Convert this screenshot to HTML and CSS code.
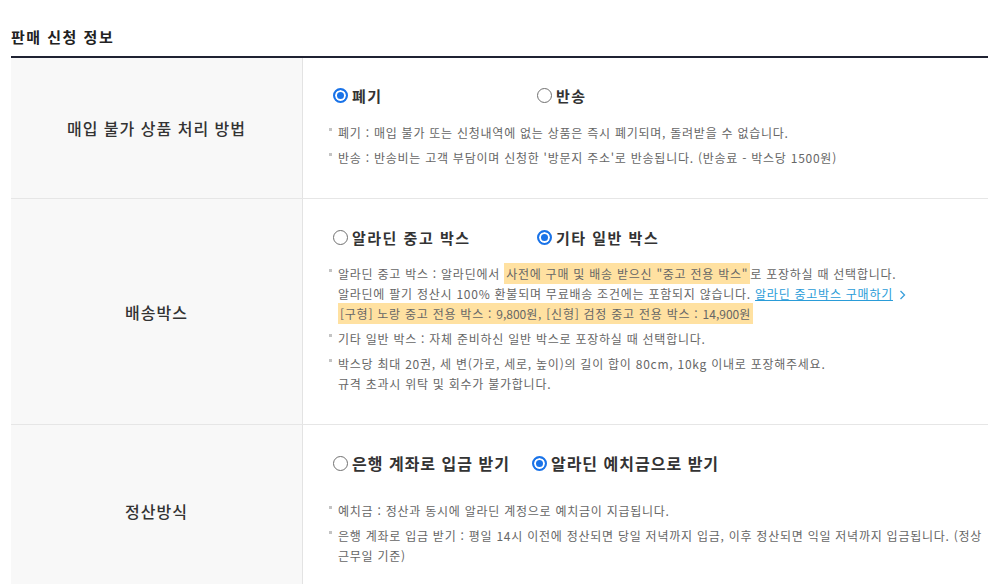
FILE: index.html
```html
<!DOCTYPE html>
<html lang="ko">
<head>
    <meta charset="UTF-8">
    <meta name="viewport" content="width=device-width, initial-scale=1.0">
    <title>판매 신청 정보</title>
    <link rel="stylesheet" href="styles.css">
</head>
<body>
    <div class="section">
        <h2 class="section-title">판매 신청 정보</h2>

        <div class="form-table">
            <!-- 매입 불가 상품 -->
            <div class="form-row">
                <div class="form-label">매입 불가 상품 처리 방법</div>
                <div class="form-field">
                    <div class="options">
                        <label class="option"><span class="radio checked"></span>폐기</label>
                        <label class="option"><span class="radio"></span>반송</label>
                    </div>
                    <ul class="notes">
                        <li>폐기 : 매입 불가 또는 신청내역에 없는 상품은 즉시 폐기되며, 돌려받을 수 없습니다.</li>
                        <li>반송 : 반송비는 고객 부담이며 신청한 '방문지 주소'로 반송됩니다. (반송료 - 박스당 1500원)</li>
                    </ul>
                </div>
            </div>

            <!-- 배송박스 -->
            <div class="form-row">
                <div class="form-label">배송박스</div>
                <div class="form-field">
                    <div class="options">
                        <label class="option"><span class="radio"></span>알라딘 중고 박스</label>
                        <label class="option"><span class="radio checked"></span>기타 일반 박스</label>
                    </div>
                    <ul class="notes notes-tight">
                        <li>알라딘 중고 박스 : 알라딘에서 <span class="mark">사전에 구매 및 배송 받으신 "중고 전용 박스"</span>로 포장하실 때 선택합니다.<br>
                            알라딘에 팔기 정산시 100% 환불되며 무료배송 조건에는 포함되지 않습니다. <a href="#" class="link">알라딘 중고박스 구매하기</a>
                            <svg class="chevron" width="7" height="10" viewBox="0 0 7 10"><polyline points="1.5,1 5.5,5 1.5,9" fill="none" stroke="#3a9fdb" stroke-width="1.3"/></svg><br>
                            <span class="mark">[구형] 노랑 중고 전용 박스 : <span class="num">9,800</span>원, [신형] 검정 중고 전용 박스 : <span class="num">14,900</span>원</span></li>
                        <li>기타 일반 박스 : 자체 준비하신 일반 박스로 포장하실 때 선택합니다.</li>
                        <li>박스당 최대 20권, 세 변(가로, 세로, 높이)의 길이 합이 80cm, 10kg 이내로 포장해주세요.<br>
                            규격 초과시 위탁 및 회수가 불가합니다.</li>
                    </ul>
                </div>
            </div>

            <!-- 정산방식 -->
            <div class="form-row">
                <div class="form-label">정산방식</div>
                <div class="form-field">
                    <div class="options options-wide">
                        <label class="option"><span class="radio"></span>은행 계좌로 입금 받기</label>
                        <label class="option"><span class="radio checked"></span>알라딘 예치금으로 받기</label>
                    </div>
                    <ul class="notes notes-far">
                        <li>예치금 : 정산과 동시에 알라딘 계정으로 예치금이 지급됩니다.</li>
                        <li>은행 계좌로 입금 받기 : 평일 14시 이전에 정산되면 당일 저녁까지 입금, 이후 정산되면 익일 저녁까지 입금됩니다. (정상 근무일 기준)</li>
                    </ul>
                </div>
            </div>
        </div>
    </div>
</body>
</html>
```

FILE: styles.css
```css
body {
    margin: 0;
    font-family: "Noto Sans CJK KR", "Noto Sans", sans-serif;
    color: #333;
    background-color: #fff;
}

.section {
    width: 977px;
    margin-left: 11px;
}

.section-title {
    margin: 26px 0 0;
    padding-bottom: 8px;
    font-size: 15px;
    line-height: 22px;
    font-weight: 700;
    letter-spacing: 1.5px;
    color: #222;
    border-bottom: 2px solid #1f2232;
}

.form-row {
    display: grid;
    grid-template-columns: 292px 1fr;
    border-top: 1px solid #e6e6e6;
}

.form-row:first-child {
    border-top: none;
}

.form-label {
    display: flex;
    align-items: center;
    justify-content: center;
    background-color: #f8f8f8;
    border-right: 1px solid #e3e3e3;
    font-size: 16px;
    font-weight: 500;
    letter-spacing: 1px;
    color: #333;
}

.form-field {
    padding: 27px 0 30px 30px;
}

.form-row:first-child .form-field {
    padding-top: 26px;
}

/* Boutons radio */
.options {
    display: flex;
    gap: 22px;
}

.option {
    display: flex;
    align-items: center;
    gap: 4px;
    min-width: 182px;
    height: 22px;
    font-size: 15px;
    font-weight: 700;
    letter-spacing: 1.5px;
    color: #333;
    cursor: pointer;
}

.options-wide .option {
    min-width: 0;
    font-size: 16px;
    letter-spacing: 1px;
}

.radio {
    box-sizing: border-box;
    width: 15px;
    height: 15px;
    border: 1px solid #707070;
    border-radius: 50%;
    background-color: #fff;
    flex-shrink: 0;
}

.radio.checked {
    border: 2px solid #1a73e8;
    background-color: #1a73e8;
    box-shadow: inset 0 0 0 2px #fff;
}

/* Notes */
.notes {
    list-style: none;
    margin: 17px 0 0;
    padding: 0 0 0 5px;
    font-size: 12px;
    line-height: 20px;
    letter-spacing: 0.75px;
    word-break: keep-all;
    color: #666;
}

.notes-tight {
    margin-top: 16px;
}

.notes-far {
    margin-top: 27px;
}

.notes li {
    position: relative;
}

.notes li + li {
    margin-top: 5px;
}

.notes li::before {
    content: "";
    position: absolute;
    left: -9px;
    top: 5px;
    width: 3px;
    height: 3px;
    background-color: #c4c4c4;
}

.mark {
    background-color: #ffe1a1;
    padding: 2px 2px;
}

.num {
    letter-spacing: 0;
}

.link {
    color: #2a9cd8;
    text-decoration: underline;
}

.chevron {
    margin-left: 2px;
    vertical-align: -1px;
}
```
